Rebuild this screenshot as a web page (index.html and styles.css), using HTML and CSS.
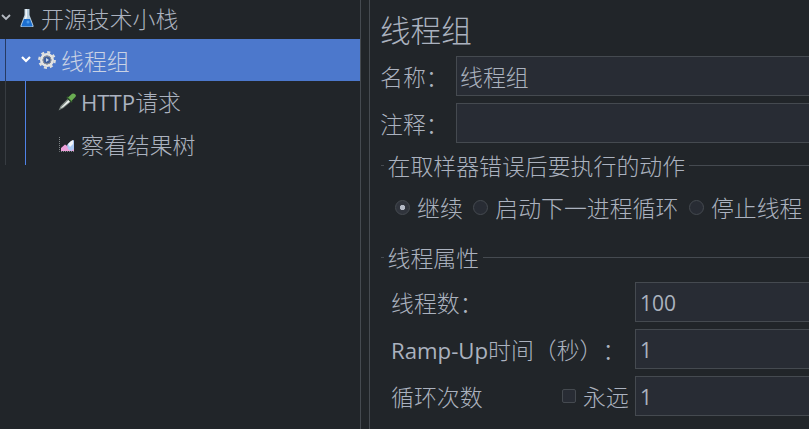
FILE: index.html
```html
<!DOCTYPE html>
<html lang="zh-CN">
<head>
    <meta charset="UTF-8">
    <meta name="viewport" content="width=device-width, initial-scale=1.0">
    <title>线程组</title>
    <link rel="stylesheet" href="styles.css">
</head>
<body>
    <div class="app">
        <div class="tree">
            <div class="tree-row">
                <svg class="arrow" viewBox="0 0 12 12"><path d="M2 4l4 4 4-4"/></svg>
                <svg class="icon flask" viewBox="0 0 18 22">
                    <path d="M6.5 2h5v6l4 10.5q.5 1.5-1 1.5h-11q-1.500 0-1-1.500l4-10.500z" fill="#b9cfe0"/>
                    <path d="M7.500 2h1.500v8l-3 7H4.500l3-8z" fill="#f1f5f8"/>
                    <path d="M6 12h6l2.500 6.500q.300 1-1 1H4.500q-1.300 0-1-1z" fill="#1c6fd0"/>
                    <circle cx="10" cy="15" r="1.500" fill="#4b9bea"/>
                </svg>
                <span class="label">开源技术小栈</span>
            </div>
            <div class="tree-row level-1 selected">
                <svg class="arrow" viewBox="0 0 12 12"><path d="M2 4l4 4 4-4"/></svg>
                <svg class="icon" viewBox="0 0 18 18">
                    <circle cx="9" cy="9" r="7.800" fill="none" stroke="#dfe0de" stroke-width="2.200" stroke-dasharray="3.060 3.060"/>
                    <circle cx="9" cy="9" r="5.700" fill="none" stroke="#e4e4e1" stroke-width="2.600"/>
                    <circle cx="9" cy="9" r="4" fill="#3f609f" stroke="#8d9094"/>
                    <path d="M8 7l3 2-3 2z" fill="#c9daf0"/>
                </svg>
                <span class="label">线程组</span>
            </div>
            <div class="tree-row level-2">
                <svg class="icon" viewBox="0 0 18 18">
                    <path d="M.5 17.500l2-4.500 7-7 3 3-7 6z" fill="#7f8984"/>
                    <path d="M2.500 15l8-8 1.500 1.500-7.500 6z" fill="#eef2ef"/>
                    <path d="M9 4l5 5" stroke="#31572c" stroke-width="2"/>
                    <path d="M10 4.500l4-3.800q2.500-1 3.800 1.300 .300 1-.500 2l-3.800 4z" fill="#6aad52"/>
                </svg>
                <span class="label"><span class="latin">HTTP</span>请求</span>
            </div>
            <div class="tree-row level-2">
                <svg class="icon" viewBox="0 0 18 18">
                    <path d="M1.500 2v14.500H17" fill="none" stroke="#7d8385" stroke-dasharray="1 1"/>
                    <path d="M3 16v-3l4-3.500 3 2 3-2 3 1V16z" fill="#ec9fd9"/>
                    <path d="M9 10l3-3 4-2v9l-3 2-3-2z" fill="#a9c8f3"/>
                    <path d="M10 9l3-3 2-1v4l-3 3z" fill="#f2f5fb"/>
                </svg>
                <span class="label">察看结果树</span>
            </div>
        </div>

        <div class="panel">
            <h1>线程组</h1>
            <div class="field">
                <label for="name">名称：</label>
                <input type="text" id="name" value="线程组">
            </div>
            <div class="field">
                <label for="comment">注释：</label>
                <input type="text" id="comment">
            </div>

            <div class="group-title">在取样器错误后要执行的动作</div>
            <div class="radios">
                <label><input type="radio" name="action" checked>继续</label>
                <label><input type="radio" name="action">启动下一进程循环</label>
                <label><input type="radio" name="action">停止线程</label>
            </div>

            <div class="group-title">线程属性</div>
            <div class="props">
                <div class="prop">
                    <label for="threads">线程数：</label>
                    <input type="text" id="threads" class="number" value="100">
                </div>
                <div class="prop">
                    <label for="rampup"><span class="latin">Ramp-Up</span>时间（秒）：</label>
                    <input type="text" id="rampup" class="number" value="1">
                </div>
                <div class="prop">
                    <label for="loops">循环次数</label>
                    <label class="forever"><input type="checkbox">永远</label>
                    <input type="text" id="loops" class="number" value="1">
                </div>
            </div>
        </div>
    </div>
</body>
</html>
```
FILE: styles.css
```css
* {
    box-sizing: border-box;
}

body {
    margin: 0;
    overflow: hidden;
    background: #212529;
    color: #abb2bf;
    font-family: "Noto Sans CJK SC", sans-serif;
    font-size: 22.9px;
    font-weight: 300;
    text-spacing-trim: space-all;
}

.app {
    display: flex;
    width: 100vw;
    height: 100vh;
    overflow: hidden;
}

.latin,
.number {
    font-family: "Open Sans", "Noto Sans", sans-serif;
    font-size: 22.2px;
    font-weight: 400;
}

/* Tree */
.tree {
    flex: 0 0 361px;
    margin-top: -3px;
    border-right: 1px solid #454a50;
}

.tree-row {
    display: flex;
    align-items: center;
    height: 42px;
    line-height: 42px;
    white-space: nowrap;
}

.level-1 {
    padding-left: 20px;
    background: linear-gradient(#263a63, #263a63) 5px 0 / 1px 100% no-repeat;
}

.level-1.selected {
    background-color: #4c78cc;
    color: #c9d2e4;
}

.level-2 {
    padding-left: 58px;
    background:
        linear-gradient(#373c41, #373c41) 5px 0 / 1px 100% no-repeat,
        linear-gradient(#4f82e6, #4f82e6) 25px 0 / 1px 100% no-repeat;
}

.arrow {
    width: 12px;
    height: 12px;
    margin-right: 6px;
    margin-top: -3px;
    fill: none;
    stroke: #b5bac2;
    stroke-width: 1.8;
}

.selected .arrow {
    stroke: #fff;
    stroke-width: 2.2;
}

.icon {
    width: 18px;
    height: 18px;
    margin-right: 5px;
}

.flask {
    height: 22px;
}

/* Settings */
.panel {
    flex: 1;
    min-width: 0;
    margin-left: 8px;
    padding-left: 11px;
    border-left: 1px solid #454a50;
}

h1 {
    margin: 0 0 0 -1px;
    height: 56px;
    font-size: 30.6px;
    font-weight: 300;
    line-height: 58px;
}

.field {
    display: flex;
    align-items: center;
    height: 40px;
    margin: 0 0 7px -1px;
    white-space: nowrap;
}

.field label {
    flex: 0 0 76px;
}

input[type="text"] {
    flex: 1;
    min-width: 0;
    height: 40px;
    padding: 0 4px;
    border: 1px solid #454a50;
    border-right: none;
    border-radius: 0;
    outline: none;
    background: #282c34;
    color: inherit;
}

.field input[type="text"] {
    padding-left: 3px;
    font: inherit;
}

input.number {
    padding-top: 3px;
    font-size: 21px;
}

.group-title {
    display: flex;
    align-items: center;
    gap: 3.5px;
    height: 30px;
    white-space: nowrap;
}

.group-title::before,
.group-title::after {
    content: "";
    height: 1px;
    background: #454a50;
}

.group-title::before {
    width: 3px;
}

.group-title::after {
    flex: 1;
}

.radios {
    display: flex;
    gap: 10.5px;
    height: 62px;
    padding: 11px 0 0 14px;
    line-height: 32px;
    white-space: nowrap;
}

.radios label,
.forever {
    display: flex;
    align-items: center;
    height: 32px;
}

input[type="radio"],
input[type="checkbox"] {
    appearance: none;
    flex: none;
    width: 15px;
    height: 15px;
    margin: 0 7px 0 0;
    border: 1px solid #454a50;
    border-radius: 50%;
    background: #282c34;
}

input[type="radio"]:checked {
    background: radial-gradient(circle, #b4bac6 2.3px, #30343c 3px);
}

input[type="checkbox"] {
    width: 14px;
    height: 14px;
    border-radius: 2px;
}

.props {
    display: flex;
    flex-direction: column;
    gap: 7px;
    padding: 10px 0 0 10px;
}

.prop {
    display: flex;
    align-items: center;
    height: 40px;
    white-space: nowrap;
}

.prop > label:first-child {
    flex: 0 0 244px;
}

.prop:last-child > label:first-child {
    flex-basis: 171px;
}

.prop .number {
    padding-top: 2px;
    padding-bottom: 0;
}

.forever {
    flex: 0 0 73px;
}
```
